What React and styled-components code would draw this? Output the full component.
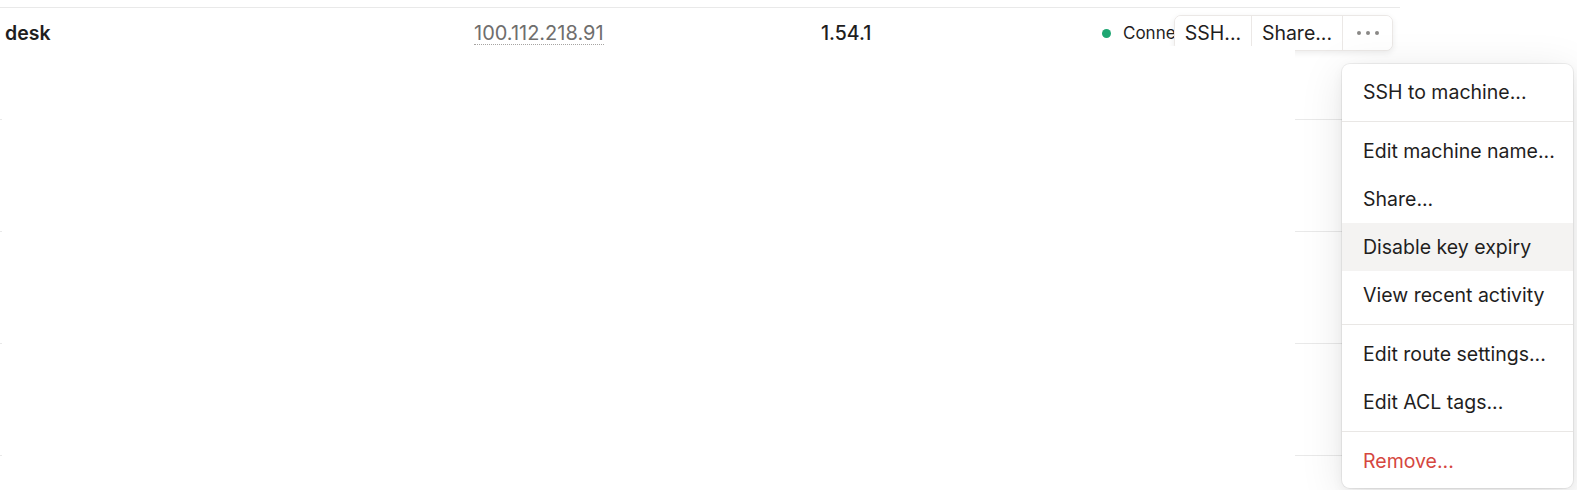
import React from 'react';
import styled, { createGlobalStyle } from 'styled-components';

const Global = createGlobalStyle`
  html, body { margin: 0; padding: 0; background: #fff; }
  body {
    font-family: Inter, "Noto Sans", sans-serif;
    color: #1f1e1e;
    overflow: hidden;
    -webkit-font-smoothing: antialiased;
  }
`;

const Page = styled.div`
  position: relative;
  height: 490px;
  box-sizing: border-box;
  padding-top: 7px;
  overflow: hidden;
`;

const Table = styled.div`
  width: 1400px;
`;

const Row = styled.div`
  position: relative;
  display: grid;
  grid-template-columns: 469px 347px 281px 1fr;
  align-items: start;
  height: 112px;
  box-sizing: border-box;
  border-top: 1px solid #e9e9e9;
  padding: 13px 0 0 5px;
  font-size: 19.5px;
  line-height: 24px;
`;

const Name = styled.div`
  font-weight: 600;
`;

const Address = styled.div`
  padding-top: 2px;
  line-height: 21px;
  span {
    display: inline-block;
    color: #6f6e6d;
    font-size: 20px;
    border-bottom: 1px dotted #a6a4a2;
  }
`;

const Version = styled.div`
  font-weight: 500;
`;

const Status = styled.div`
  display: flex;
  align-items: center;
  gap: 12px;
  font-size: 17px;
  white-space: nowrap;
  overflow: hidden;
`;

const Dot = styled.span`
  width: 9px;
  height: 9px;
  border-radius: 50%;
  background: #1ea672;
  flex: none;
`;

const Actions = styled.div`
  position: absolute;
  top: 7px;
  right: 7px;
  z-index: 1;
  display: flex;
  height: 36px;
  box-sizing: border-box;
  background: #fff;
  border: 1px solid #ebe8e6;
  border-radius: 7px;
  box-shadow: 0 2px 6px rgba(0, 0, 0, 0.08);
  overflow: hidden;
`;

const ActionButton = styled.button`
  display: flex;
  align-items: center;
  justify-content: center;
  width: ${(p) => p.$w}px;
  padding: 0;
  border: none;
  border-left: ${(p) => (p.$first ? 'none' : '1px solid #ebe8e6')};
  background: #fff;
  font: inherit;
  font-size: 19.5px;
  color: #1f1e1e;
  gap: 5px;
`;

const MoreDot = styled.span`
  width: 4px;
  height: 4px;
  border-radius: 50%;
  background: #8a8886;
`;

const Blank = styled.div`
  position: absolute;
  left: 2px;
  top: 46px;
  width: 1293px;
  bottom: 0;
  background: #fff;
  z-index: 2;
`;

const Menu = styled.div`
  position: absolute;
  left: 1342px;
  top: 64px;
  width: 231px;
  z-index: 1;
  box-sizing: border-box;
  padding: 4px 0 3px;
  background: #fff;
  border-radius: 8px;
  box-shadow: 0 0 0 1px rgba(0, 0, 0, 0.06), 0 4px 12px rgba(0, 0, 0, 0.05),
    0 8px 44px rgba(0, 0, 0, 0.1);
`;

const Item = styled.div`
  height: 48px;
  display: flex;
  align-items: center;
  padding: 0 20px 0 21px;
  font-size: 19.5px;
  white-space: nowrap;
  color: ${(p) => (p.$danger ? '#d5473f' : '#1f1e1e')};
  background: ${(p) => (p.$active ? '#f4f3f2' : 'transparent')};
`;

const Divider = styled.div`
  height: 1px;
  margin: 5px 0;
  background: #e9e7e5;
`;

export default function App() {
  return (
    <>
      <Global />
      <Page>
        <Table>
          <Row>
            <Name>desk</Name>
            <Address>
              <span>100.112.218.91</span>
            </Address>
            <Version>1.54.1</Version>
            <Status>
              <Dot />
              Connected
            </Status>
            <Actions>
              <ActionButton $first $w={76}>SSH...</ActionButton>
              <ActionButton $w={91}>Share...</ActionButton>
              <ActionButton $w={50} aria-label="More">
                <MoreDot />
                <MoreDot />
                <MoreDot />
              </ActionButton>
            </Actions>
          </Row>
          <Row />
          <Row />
          <Row />
          <Row />
        </Table>
        <Blank />
        <Menu>
          <Item>SSH to machine...</Item>
          <Divider />
          <Item>Edit machine name...</Item>
          <Item>Share...</Item>
          <Item $active>Disable key expiry</Item>
          <Item>View recent activity</Item>
          <Divider />
          <Item>Edit route settings...</Item>
          <Item>Edit ACL tags...</Item>
          <Divider />
          <Item $danger>Remove...</Item>
        </Menu>
      </Page>
    </>
  );
}
